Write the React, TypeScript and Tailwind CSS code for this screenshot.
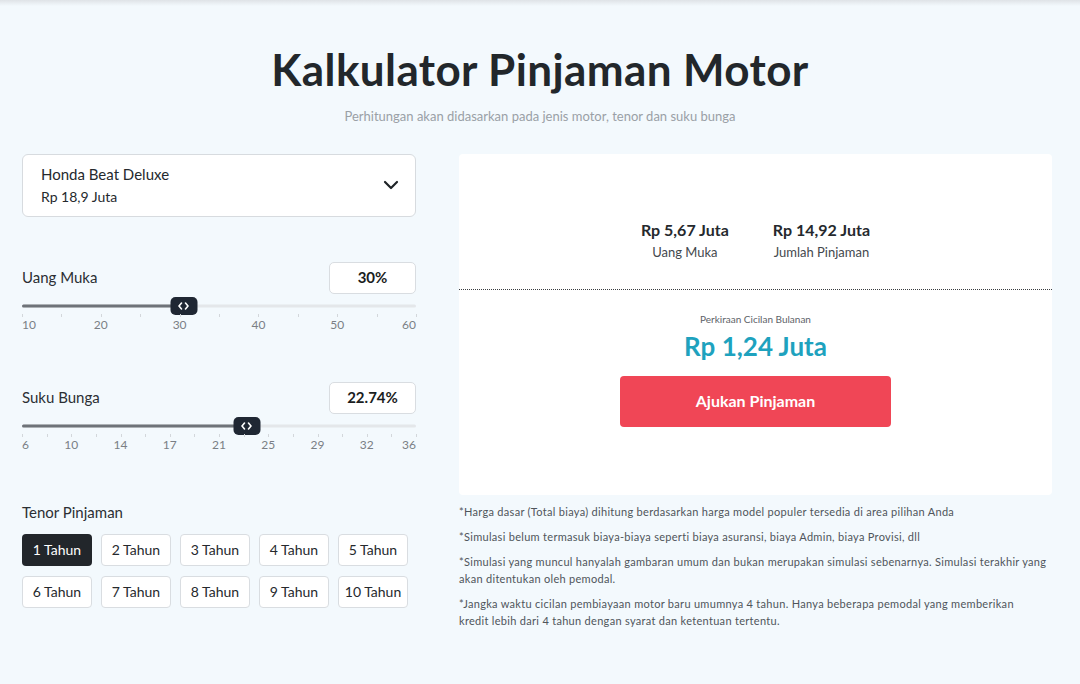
import React from "react";

const font = { fontFamily: "Lato, 'Noto Sans', sans-serif" };

function Thumb() {
  return (
    <div className="absolute top-1/2 -translate-y-1/2 -translate-x-1/2 w-[27px] h-[18px] rounded-[5px] bg-[#1f2733] flex items-center justify-center">
      <svg width="12" height="8" viewBox="0 0 12 8" fill="none" stroke="white" strokeWidth="1.6" strokeLinecap="round" strokeLinejoin="round">
        <path d="M4 1L1.5 4L4 7" />
        <path d="M8 1L10.5 4L8 7" />
      </svg>
    </div>
  );
}

function Slider({
  label,
  value,
  pct,
  labels,
}: {
  label: string;
  value: string;
  pct: number;
  labels: string[];
}) {
  const n = labels.length - 1;
  const ticks = n * 2;
  return (
    <div>
      <div className="flex items-center justify-between">
        <span className="text-[15px] text-[#2b2f33]">{label}</span>
        <div className="w-[87px] h-[32px] rounded-[5px] border border-[#d9dde1] bg-white flex items-center justify-center text-[15px] font-bold text-[#1a1d21]">
          {value}
        </div>
      </div>
      <div className="relative mt-[3px] h-[18px]">
        <div className="absolute left-0 right-0 top-1/2 -translate-y-1/2 h-[3px] bg-[#e4e7ea] rounded" />
        <div
          className="absolute left-0 top-1/2 -translate-y-1/2 h-[3px] bg-[#6e7379] rounded"
          style={{ width: `${pct}%` }}
        />
        <div className="absolute top-1/2" style={{ left: `${pct}%` }}>
          <Thumb />
        </div>
      </div>
      <div className="relative h-[2px]">
        {Array.from({ length: ticks + 1 }).map((_, i) => (
          <div
            key={i}
            className="absolute -top-[1px] w-px h-[3px] bg-[#d3d7db]"
            style={{ left: `${(i / ticks) * 100}%` }}
          />
        ))}
      </div>
      <div className="relative h-[16px] text-[12px] text-[#7a7f85]">
        {labels.map((l, i) => {
          const left = (i / n) * 100;
          const tr = i === 0 ? "translateX(0)" : i === n ? "translateX(-100%)" : "translateX(-50%)";
          return (
            <span key={l} className="absolute top-0 leading-[16px]" style={{ left: `${left}%`, transform: tr }}>
              {l}
            </span>
          );
        })}
      </div>
    </div>
  );
}

export default function App() {
  const tenors = Array.from({ length: 10 }, (_, i) => `${i + 1} Tahun`);
  return (
    <div className="min-h-[684px] bg-[#f3f9fd] text-[#22262a]" style={font}>
      <div className="h-[6px] bg-linear-to-b from-[#dfe3e7] to-[#f3f9fd]" />
      <div className="pt-[35px] text-center">
        <h1 className="text-[44px] font-bold leading-[56px] text-[#22272b] tracking-[0.4px]">Kalkulator Pinjaman Motor</h1>
        <p className="mt-[10px] text-[13px] text-[#9aa0a6]">Perhitungan akan didasarkan pada jenis motor, tenor dan suku bunga</p>
      </div>
      <div className="mt-[27px] pl-[22px] pr-[28px] flex gap-[43px]">
        <div className="w-[394px] shrink-0">
          <div className="h-[63px] rounded-[6px] border border-[#d7dbdf] bg-white pl-[18px] pr-[16px] flex items-center justify-between">
            <div>
              <div className="text-[15px] text-[#25292d] leading-[20px]">Honda Beat Deluxe</div>
              <div className="text-[14px] text-[#25292d] leading-[20px] mt-[3px]">Rp 18,9 Juta</div>
            </div>
            <svg width="16" height="10" viewBox="0 0 16 10" fill="none" stroke="#1f2327" strokeWidth="2.2" strokeLinecap="round" strokeLinejoin="round">
              <path d="M2 2L8 8L14 2" />
            </svg>
          </div>
          <div className="mt-[45px]">
            <Slider label="Uang Muka" value="30%" pct={41} labels={["10", "20", "30", "40", "50", "60"]} />
          </div>
          <div className="mt-[49px]">
            <Slider label="Suku Bunga" value="22.74%" pct={57} labels={["6", "10", "14", "17", "21", "25", "29", "32", "36"]} />
          </div>
          <div className="mt-[49px]">
            <div className="text-[15px] text-[#2b2f33] leading-[20px]">Tenor Pinjaman</div>
            <div className="mt-[12px] grid grid-cols-[repeat(5,70px)] gap-x-[9px] gap-y-[10px]">
              {tenors.map((t, i) => (
                <div
                  key={t}
                  className={
                    i === 0
                      ? "h-[32px] rounded-[4px] bg-[#22262b] text-white text-[14px] flex items-center justify-center"
                      : "h-[32px] rounded-[4px] border border-[#d9dde1] bg-white text-[#25292d] text-[14px] flex items-center justify-center"
                  }
                >
                  {t}
                </div>
              ))}
            </div>
          </div>
        </div>
        <div className="flex-1">
          <div className="h-[341px] bg-white rounded-[4px] flex flex-col">
            <div className="h-[136px] flex items-end justify-center gap-[44px] pb-[26px] border-b border-dotted border-[#3a3d40]">
              <div className="text-center">
                <div className="text-[16px] font-bold text-[#25292d] leading-[22px]">Rp 5,67 Juta</div>
                <div className="text-[13px] text-[#43484d] mt-[2px]">Uang Muka</div>
              </div>
              <div className="text-center">
                <div className="text-[16px] font-bold text-[#25292d] leading-[22px]">Rp 14,92 Juta</div>
                <div className="text-[13px] text-[#43484d] mt-[2px]">Jumlah Pinjaman</div>
              </div>
            </div>
            <div className="flex flex-col items-center pt-[22px]">
              <div className="text-[10px] text-[#5d6268] leading-[14px]">Perkiraan Cicilan Bulanan</div>
              <div className="text-[26px] font-bold text-[#1ea2be] leading-[32px] mt-[4px]">Rp 1,24 Juta</div>
              <div className="mt-[14px] w-[271px] h-[51px] rounded-[4px] bg-[#f04656] text-white font-bold text-[16px] flex items-center justify-center">
                Ajukan Pinjaman
              </div>
            </div>
          </div>
          <div className="mt-[8px] text-[11px] tracking-[0.3px] text-[#4f555b] leading-[17px] space-y-[8px] pr-[4px]">
            <p>*Harga dasar (Total biaya) dihitung berdasarkan harga model populer tersedia di area pilihan Anda</p>
            <p>*Simulasi belum termasuk biaya-biaya seperti biaya asuransi, biaya Admin, biaya Provisi, dll</p>
            <p>*Simulasi yang muncul hanyalah gambaran umum dan bukan merupakan simulasi sebenarnya. Simulasi terakhir yang akan ditentukan oleh pemodal.</p>
            <p className="pr-[20px]">*Jangka waktu cicilan pembiayaan motor baru umumnya 4 tahun. Hanya beberapa pemodal yang memberikan kredit lebih dari 4 tahun dengan syarat dan ketentuan tertentu.</p>
          </div>
        </div>
      </div>
    </div>
  );
}
